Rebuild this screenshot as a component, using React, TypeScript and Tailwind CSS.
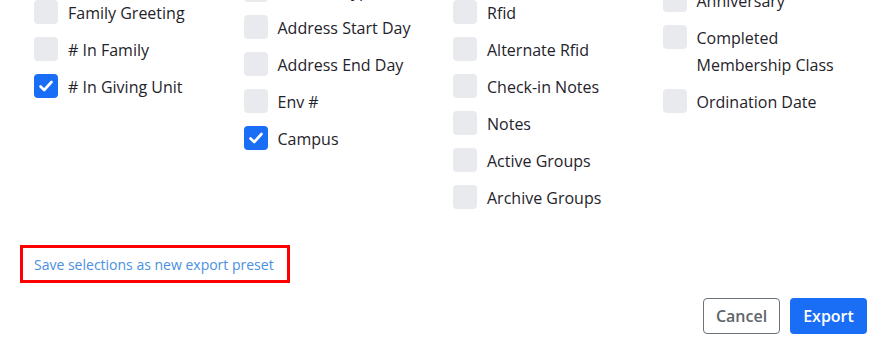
import React from "react";

type Item = { label: string; checked?: boolean };

const columns: { offset: string; items: Item[] }[] = [
  {
    offset: "-mt-[0.5px]",
    items: [
      { label: "Family Greeting" },
      { label: "# In Family" },
      { label: "# In Giving Unit", checked: true },
    ],
  },
  {
    offset: "-mt-[22.5px]",
    items: [
      { label: "Address Type" },
      { label: "Address Start Day" },
      { label: "Address End Day" },
      { label: "Env #" },
      { label: "Campus", checked: true },
    ],
  },
  {
    offset: "-mt-[0.5px]",
    items: [
      { label: "Rfid" },
      { label: "Alternate Rfid" },
      { label: "Check-in Notes" },
      { label: "Notes" },
      { label: "Active Groups" },
      { label: "Archive Groups" },
    ],
  },
  {
    offset: "-mt-[12.5px]",
    items: [
      { label: "Anniversary" },
      { label: "Completed Membership Class" },
      { label: "Ordination Date" },
    ],
  },
];

function CheckRow({ label, checked }: Item) {
  return (
    <label className="flex items-start gap-[10px] mb-[10px] text-[16px] leading-[27px] text-[#1f232b]">
      <span
        className={
          "mt-[0.5px] flex h-[24px] w-[24px] shrink-0 items-center justify-center rounded-[4px] " +
          (checked ? "bg-[#1a6ef5]" : "bg-[#e9eaee]")
        }
      >
        {checked && (
          <svg width="16" height="16" viewBox="0 0 16 16" fill="none">
            <path
              d="M2.5 8.5 L6.2 12 L13.5 4"
              stroke="white"
              strokeWidth="2.6"
              strokeLinecap="round"
              strokeLinejoin="round"
            />
          </svg>
        )}
      </span>
      <span className="pr-4">{label}</span>
    </label>
  );
}

export default function App() {
  return (
    <div
      className="w-[875px] h-[350px] bg-white overflow-hidden"
      style={{ fontFamily: '"Open Sans", "Noto Sans", sans-serif' }}
    >
      <div className="h-[230px] overflow-hidden pl-[34px]">
        <div className="grid w-[838px] grid-cols-4 items-start">
          {columns.map((col, i) => (
            <div key={i} className={col.offset}>
              {col.items.map((it) => (
                <CheckRow key={it.label} {...it} />
              ))}
            </div>
          ))}
        </div>
      </div>

      <div className="ml-[20px] mt-[15px] flex h-[38px] w-[270px] items-center border-[3px] border-[#ff0000] pl-[11px]">
        <a href="#" className="text-[14px] text-[#4a90e2]">
          Save selections as new export preset
        </a>
      </div>

      <div className="mt-[15px] flex justify-end gap-[10px] pr-[8px]">
        <button className="h-[36px] w-[77px] rounded-[4px] border border-[#6c757d] text-[16px] font-semibold text-[#5f6469]">
          Cancel
        </button>
        <button className="h-[36px] w-[77px] rounded-[4px] bg-[#1a6ef5] text-[16px] font-semibold text-white">
          Export
        </button>
      </div>
    </div>
  );
}
